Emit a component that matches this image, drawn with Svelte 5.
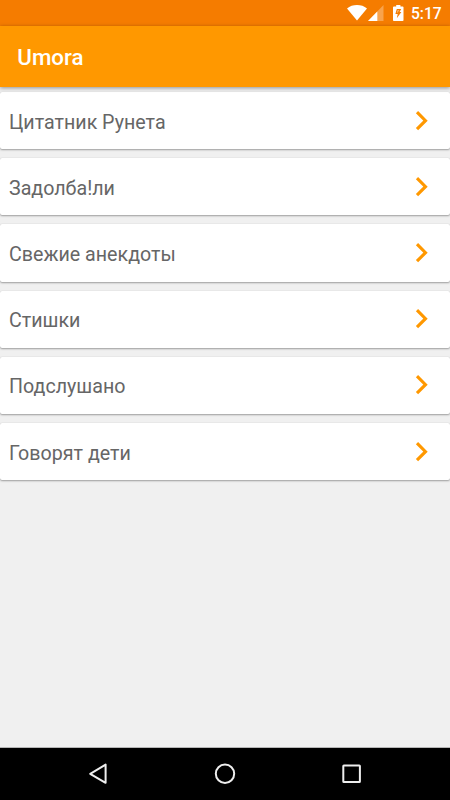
<script lang="ts">
	const time = '5:17';

	const sources = [
		'Цитатник Рунета',
		'Задолба!ли',
		'Свежие анекдоты',
		'Стишки',
		'Подслушано',
		'Говорят дети'
	];
</script>

<div class="screen">
	<div class="status-bar">
		<svg class="wifi" width="20" height="16" viewBox="0 0 20 16">
			<path d="M0 3.4C2.8 1.2 6.2 0 10 0s7.2 1.2 10 3.4L10 15.6z" fill="#fff" />
		</svg>
		<svg class="signal" width="16" height="16" viewBox="0 0 16 16">
			<path d="M15.5 0v16H0z" fill="#fff" fill-opacity="0.3" />
			<path d="M9.3 6.4V16H0z" fill="#fff" />
		</svg>
		<svg class="battery" width="11" height="16" viewBox="0 0 11 16">
			<path d="M3.2 0h4.2v1.4h2.2q.9 0 .9.8v13q0 .8-.9.8H.9q-.9 0-.9-.8v-13q0-.8.9-.8h2.3z" fill="#fff" />
			<path d="M3.8 4h4.4L6.6 7h1.8l-4.6 6.2.9-4.3H2.4z" fill="#f57c00" />
			<path d="M4.6 5h1.7L4.6 7.7h-.9z" fill="#fff" fill-opacity="0.45" />
		</svg>
		<span class="time">{time}</span>
	</div>

	<header class="toolbar">
		<h1>Umora</h1>
	</header>

	<main>
		{#each sources as source}
			<button class="card" type="button">
				<span>{source}</span>
				<svg width="14" height="20" viewBox="0 0 14 20">
					<path d="M2 1.2 10.5 9.7 2 18.2" fill="none" stroke="#ff9800" stroke-width="3.1" />
				</svg>
			</button>
		{/each}
	</main>

	<nav>
		<button type="button" aria-label="Back">
			<svg width="22" height="22" viewBox="0 0 22 22">
				<path d="M17.6 1.6v18.2L2.2 10.8z" />
			</svg>
		</button>
		<button type="button" aria-label="Home">
			<svg width="22" height="22" viewBox="0 0 22 22">
				<circle cx="11" cy="10.8" r="9.2" />
			</svg>
		</button>
		<button type="button" aria-label="Recent apps">
			<svg width="22" height="22" viewBox="0 0 22 22">
				<rect x="2.3" y="2.4" width="16.6" height="16.6" rx="0.6" />
			</svg>
		</button>
	</nav>
</div>

<style>
	:global(body) {
		margin: 0;
	}

	.screen {
		display: flex;
		flex-direction: column;
		width: 450px;
		height: 800px;
		overflow: hidden;
		background: #f0f0f0;
		font-family: Roboto, 'Noto Sans', sans-serif;
	}

	button {
		padding: 0;
		border: none;
		background: none;
		font-family: inherit;
	}

	.status-bar {
		display: flex;
		flex: none;
		align-items: center;
		justify-content: flex-end;
		box-sizing: border-box;
		height: 26px;
		padding-right: 9px;
		background: #f57c00;
		color: #fff;
	}

	.signal {
		margin-left: 1px;
	}

	.battery {
		margin-left: 9px;
	}

	.time {
		width: 30px;
		margin-left: 7px;
		padding-top: 2px;
		font-size: 15.6px;
		font-weight: 500;
		line-height: 24px;
		white-space: nowrap;
	}

	.toolbar {
		display: flex;
		flex: none;
		align-items: center;
		height: 61px;
		padding: 1px 17.3px 0;
		box-sizing: border-box;
		background: #ff9800;
		box-shadow: 0 1px 4px rgba(0, 0, 0, 0.4);
		z-index: 1;
	}

	h1 {
		margin: 0;
		color: #fff;
		font-size: 22.3px;
		font-weight: 500;
	}

	main {
		display: flex;
		flex: 1;
		flex-direction: column;
		gap: 9px;
		padding-top: 5px;
		border-bottom: 1px solid #b5b5b5;
	}

	.card {
		display: flex;
		flex: none;
		align-items: center;
		justify-content: space-between;
		height: 57.2px;
		padding: 0 21px 0 9px;
		border-radius: 2px;
		background: #fff;
		box-shadow:
			0 1px 2px rgba(0, 0, 0, 0.34),
			0 0 1px rgba(0, 0, 0, 0.16);
		color: #666;
		font-size: 19.65px;
		text-align: left;
	}

	.card span {
		padding-top: 3.2px;
	}

	nav {
		display: flex;
		flex: none;
		justify-content: center;
		height: 52px;
		background: #000;
	}

	nav button {
		display: flex;
		align-items: center;
		justify-content: center;
		width: 126.5px;
	}

	nav svg {
		fill: none;
		stroke: #eee;
		stroke-width: 2;
		stroke-linejoin: round;
	}
</style>
